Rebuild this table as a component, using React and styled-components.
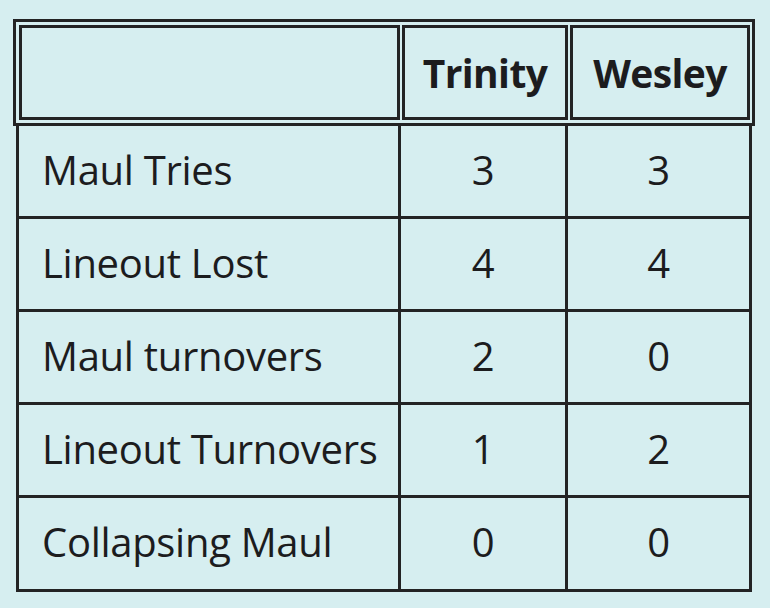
import React from "react";
import styled, { createGlobalStyle } from "styled-components";

const Global = createGlobalStyle`
  html, body { margin: 0; padding: 0; background: #d6eef0; }
  body { font-family: "Open Sans", "Liberation Sans", sans-serif; color: #1c1c1e; }
`;

const Page = styled.div`
  width: 770px;
  height: 608px;
  background: #d6eef0;
  padding: 19px 0 0 13px;
  box-sizing: border-box;
`;

const Table = styled.div`
  width: 742px;
  display: flex;
  flex-direction: column;
`;

const HeaderRow = styled.div`
  border: 3px solid #232324;
  padding: 3px 2px 3px 3px;
  display: grid;
  grid-template-columns: 381px 166px 180px;
  column-gap: 2px;
`;

const HeadCell = styled.div`
  height: 95px;
  box-sizing: border-box;
  border: 3px solid #232324;
  display: flex;
  align-items: center;
  justify-content: center;
  font-weight: 700;
  font-size: 39px;
  letter-spacing: -0.6px;
  padding-bottom: 1px;
`;

const Body = styled.div`
  margin: 0 3px 0 3px;
  border: 3px solid #232324;
  border-top: none;
`;

const Row = styled.div`
  display: grid;
  grid-template-columns: 382px 167px 1fr;
  height: 93px;
  box-sizing: border-box;
  border-bottom: 3px solid #232324;
  &:last-child { border-bottom: none; height: 91px; }
`;

const Cell = styled.div`
  display: flex;
  align-items: center;
  justify-content: ${(p) => (p.$label ? "flex-start" : "center")};
  padding-left: ${(p) => (p.$label ? "23px" : "0")};
  border-right: ${(p) => (p.$last ? "none" : "3px solid #232324")};
  font-size: 40px;
  letter-spacing: -0.3px;
  padding-bottom: 4px;
`;

const rows = [
  ["Maul Tries", "3", "3"],
  ["Lineout Lost", "4", "4"],
  ["Maul turnovers", "2", "0"],
  ["Lineout Turnovers", "1", "2"],
  ["Collapsing Maul", "0", "0"],
];

export default function App() {
  return (
    <Page>
      <Global />
      <Table>
        <HeaderRow>
          <HeadCell />
          <HeadCell>Trinity</HeadCell>
          <HeadCell>Wesley</HeadCell>
        </HeaderRow>
        <Body>
          {rows.map((r) => (
            <Row key={r[0]}>
              <Cell $label>{r[0]}</Cell>
              <Cell>{r[1]}</Cell>
              <Cell $last>{r[2]}</Cell>
            </Row>
          ))}
        </Body>
      </Table>
    </Page>
  );
}
